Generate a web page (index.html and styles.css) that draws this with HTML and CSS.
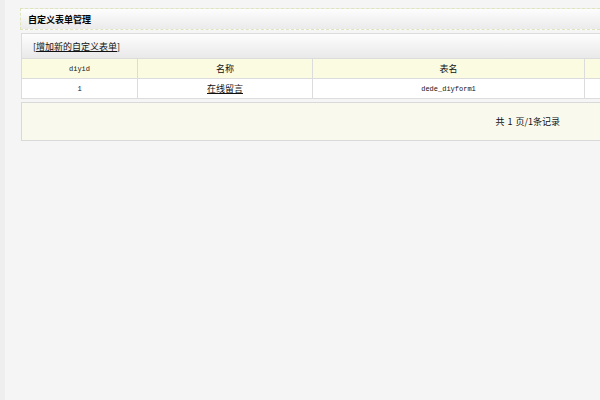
FILE: index.html
```html
<!DOCTYPE html>
<html>
<head>
<meta charset="utf-8">
<title>自定义表单管理</title>
<link rel="stylesheet" href="styles.css">
</head>
<body>
<div class="frame">
  <div class="titlebar">自定义表单管理</div>
  <div class="listbox">
    <div class="caption">[<a href="#">增加新的自定义表单</a>]</div>
    <table class="list">
      <colgroup>
        <col class="c1">
        <col class="c2">
        <col class="c3">
        <col class="c4">
      </colgroup>
      <tr class="head">
        <td class="mono">diyid</td>
        <td>名称</td>
        <td>表名</td>
        <td></td>
      </tr>
      <tr class="row">
        <td class="mono">1</td>
        <td><a href="#">在线留言</a></td>
        <td class="mono">dede_diyform1</td>
        <td></td>
      </tr>
    </table>
  </div>
  <div class="pager">共 1 页/1条记录</div>
</div>
</body>
</html>
```

FILE: styles.css
```css
html, body {
  margin: 0;
  padding: 0;
}
body {
  width: 600px;
  height: 400px;
  background: #f5f5f5;
  font-family: "Noto Sans CJK SC", "Noto Sans", sans-serif;
  font-size: 9px;
  color: #111;
}
a {
  color: #111;
  text-decoration: underline;
}
.frame {
  box-sizing: border-box;
  height: 400px;
  border-left: 5px solid #eeeeee;
  padding: 8px 0 0 15px;
}
.titlebar {
  box-sizing: border-box;
  width: 580px;
  height: 22px;
  border: 1px dashed #dfe5bb;
  border-right: none;
  background: linear-gradient(#fdfdfd, #ebebeb);
  padding-left: 7px;
  display: flex;
  align-items: center;
  font-weight: bold;
  font-size: 9px;
  color: #000;
}
.listbox {
  box-sizing: border-box;
  margin: 3px 0 0 1px;
  width: 579px;
  border-left: 1px solid #dcdcdc;
  border-top: 1px solid #dcdcdc;
}
.caption {
  height: 24px;
  display: flex;
  align-items: center;
  padding-left: 11px;
  border-bottom: 1px solid #dcdcdc;
  background: linear-gradient(#fdfdfd, #e9e9e9);
}
.list {
  width: 578px;
  table-layout: fixed;
  border-collapse: separate;
  border-spacing: 0;
}
.c1 { width: 115px; }
.c2 { width: 175px; }
.c3 { width: 272px; }
.c4 { width: 16px; }
.list td {
  padding: 0;
  text-align: center;
  white-space: nowrap;
  border-bottom: 1px solid #dcdcdc;
}
.list td + td {
  border-left: 1px solid #dcdcdc;
}
.head td {
  height: 19px;
  background: #fbfbe2;
}
.row td {
  height: 19px;
  background: #ffffff;
}
.mono {
  font-family: "Liberation Mono", monospace;
  font-size: 7px;
  color: #111;
}
.pager {
  box-sizing: border-box;
  margin: 3px 0 0 1px;
  width: 579px;
  height: 39px;
  border: 1px solid #d9d9d9;
  border-right: none;
  background: #f9f9ee;
  display: flex;
  align-items: center;
  justify-content: flex-end;
  padding-right: 40px;
  word-spacing: 1px;
}
```
